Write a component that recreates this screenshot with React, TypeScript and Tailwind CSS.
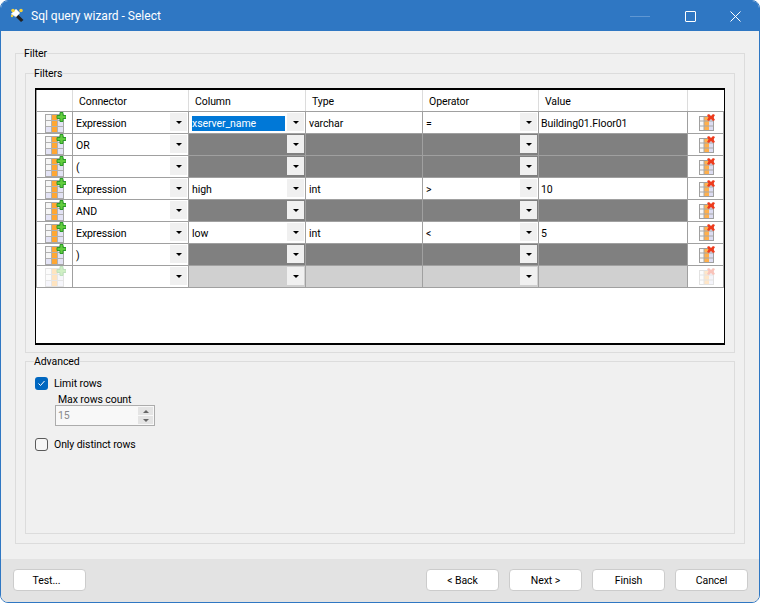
import React from "react";

function AddIcon({ faded }: { faded?: boolean }) {
  return (
    <svg width="22" height="22" viewBox="0 0 22 22" className={faded ? "opacity-30" : ""}>
      <rect x="1.500" y="2.500" width="18" height="18" fill="#f6f6f6" stroke="#a8a8a8" />
      <rect x="8" y="3" width="6" height="17" fill="#ffa733" />
      <rect x="14" y="3" width="5" height="17" fill="#e2e2f4" />
      <rect x="2" y="15" width="6" height="5" fill="#e4e4f6" />
      <path d="M2 8.500h17M2 14.500h17M7.500 3v17M13.500 3v17" stroke="#b0b0b0" strokeWidth="1" fill="none" />
      <path d="M16 0.500h3v3h3v3h-3v3h-3v-3h-3v-3h3z" fill="#62cc3e" stroke="#2a9a28" strokeWidth="1" />
    </svg>
  );
}

function DelIcon({ faded }: { faded?: boolean }) {
  return (
    <svg width="22" height="22" viewBox="0 0 22 22" className={faded ? "opacity-30" : ""}>
      <rect x="4.500" y="4.500" width="14" height="14" fill="#f8f8f8" stroke="#a0a0a0" />
      <rect x="9" y="5" width="5" height="13" fill="#ffb04c" />
      <rect x="14" y="5" width="4" height="13" fill="#dcdcf2" />
      <path d="M5 9h13M5 14h13M9 5v13" stroke="#a8a8a8" strokeWidth="1" fill="none" />
      <path d="M12 3l2-1 2 2 2-2 2 1-1.500 2.500 1.500 2.500-2 1-2-2-2 2-2-1 1.500-2.500z" fill="#ee3b1d" />
    </svg>
  );
}

function Arrow() {
  return (
    <svg width="6" height="3" viewBox="0 0 6 3">
      <path d="M0 0h6L3 3z" fill="#000" />
    </svg>
  );
}

function ComboCell({ text, state, width, selected }: { text?: string; state: "on" | "off" | "dim"; width: string; selected?: boolean }) {
  const bg = state === "off" ? "bg-[#808080]" : state === "dim" ? "bg-[#d0d0d0]" : "bg-white";
  return (
    <div className={`${width} ${bg} flex items-center border-r border-b border-[#a0a0a0] pl-[3px] pr-px`}>
      <div className="flex-1 min-w-0 pt-[2px]">
        {selected ? (
          <span className="block w-[93px] h-[15px] leading-[15px] bg-[#0078d7] text-white">{text}</span>
        ) : (
          <span>{text}</span>
        )}
      </div>
      <div className="w-[17px] h-[18px] self-start mt-px bg-[#f0f0f0] flex items-center justify-center">
        <Arrow />
      </div>
    </div>
  );
}

function TextCell({ text, state, width, pad }: { text?: string; state: "on" | "off" | "dim"; width: string; pad: string }) {
  const bg = state === "off" ? "bg-[#808080]" : state === "dim" ? "bg-[#d0d0d0]" : "bg-white";
  return <div className={`${width} ${bg} ${pad} flex items-center border-r border-b border-[#a0a0a0] pt-[2px]`}>{text}</div>;
}

type Row = { conn: string; col?: string; type?: string; op?: string; val?: string; sel?: boolean; state: "on" | "off" | "dim"; faded?: boolean };

const rows: Row[] = [
  { conn: "Expression", col: "xserver_name", type: "varchar", op: "=", val: "Building01.Floor01", sel: true, state: "on" },
  { conn: "OR", state: "off" },
  { conn: "(", state: "off" },
  { conn: "Expression", col: "high", type: "int", op: ">", val: "10", state: "on" },
  { conn: "AND", state: "off" },
  { conn: "Expression", col: "low", type: "int", op: "<", val: "5", state: "on" },
  { conn: ")", state: "off" },
  { conn: "", state: "dim", faded: true },
];

const headers: [string, string][] = [
  ["", "w-[36px]"],
  ["Connector", "w-[116px]"],
  ["Column", "w-[117px]"],
  ["Type", "w-[117px]"],
  ["Operator", "w-[116px]"],
  ["Value", "w-[149px]"],
  ["", "w-[36px]"],
];

function Btn({ children, pad }: { children: React.ReactNode; pad?: string }) {
  return (
    <button className={`w-[73px] h-[22px] pt-[3px] ${pad ?? ""} bg-white border border-[#cccccc] rounded-[4px] text-black leading-none`}>
      {children}
    </button>
  );
}

export default function App() {
  return (
    <div className="w-[760px] h-[603px] bg-white">
      <div
        className="w-full h-full flex flex-col bg-[#f0f0f0] border border-[#2f77c3] rounded-lg overflow-hidden text-[10.5px] tracking-[-0.08px] text-black"
        style={{ fontFamily: 'Roboto, "Noto Sans", sans-serif' }}
      >
        <div className="h-[30px] shrink-0 bg-[#2f77c3] flex items-center text-white text-[12px] tracking-normal">
          <svg width="16" height="16" viewBox="0 0 16 16" className="ml-[9px] mr-[5px]">
            <path d="M5 8l6 6 2.500-2-6-6z" fill="#222" />
            <path d="M1 6L6 1l4 4-4 4z" fill="#fff" stroke="#cfcfcf" strokeWidth="0.5" />
            <circle cx="3" cy="2.500" r="1.800" fill="#f2cf3c" />
            <circle cx="11" cy="2.500" r="1.800" fill="#f2cf3c" />
            <circle cx="2" cy="8" r="1.200" fill="#f2cf3c" />
          </svg>
          <span className="flex-1">Sql query wizard - Select</span>
          <div className="w-[20px] h-px bg-[#5f97d3] mr-[35px]" />
          <div className="w-[11px] h-[11px] border border-white rounded-[1px] mr-[34px]" />
          <svg width="11" height="11" viewBox="0 0 11 11" className="mr-[18px]">
            <path d="M0.500 0.500l10 10M10.500 0.500l-10 10" stroke="#fff" strokeWidth="1" />
          </svg>
        </div>

        <div className="flex-1 min-h-0 pl-[14px] pr-[14px] pt-[14px]">
          <fieldset className="h-[499px] border border-[#dcdcdc] px-[9px] pb-[9px]">
            <legend className="-ml-px h-[16px] leading-[18px]">Filter</legend>
            <fieldset className="mt-1 border border-[#dcdcdc] px-[9px] pt-[7px] pb-[7px]">
              <legend className="-ml-px h-[16px] leading-[18px]">Filters</legend>
              <div className="w-[690px] h-[257px] border border-black border-t-2 border-b-2 bg-white">
                <div className="border-l border-[#a0a0a0]">
                  <div className="flex h-[22px] border-b border-[#a0a0a0]">
                    {headers.map(([h, w], i) => (
                      <div key={i} className={`${w} flex items-center pl-[6px] pt-[2px] ${i < 6 ? "border-r border-[#dcdcdc]" : ""}`}>
                        {h}
                      </div>
                    ))}
                  </div>
                  {rows.map((r, i) => (
                    <div key={i} className="flex h-[22px]">
                      <div className="w-[36px] border-r border-b border-[#a0a0a0] flex items-center justify-center">
                        <AddIcon faded={r.faded} />
                      </div>
                      <ComboCell text={r.conn} state="on" width="w-[116px]" />
                      <ComboCell text={r.col} state={r.state} width="w-[117px]" selected={r.sel} />
                      <TextCell text={r.type} state={r.state} width="w-[117px]" pad="pl-[3px]" />
                      <ComboCell text={r.op} state={r.state} width="w-[116px]" />
                      <TextCell text={r.val} state={r.state} width="w-[149px]" pad="pl-[2px]" />
                      <div className="w-[36px] border-r border-b border-[#a0a0a0] flex items-center justify-center">
                        <DelIcon faded={r.faded} />
                      </div>
                    </div>
                  ))}
                </div>
              </div>
            </fieldset>
            <fieldset className="h-[181px] border border-[#dcdcdc] px-[9px]">
              <legend className="-ml-px h-[16px] leading-[18px]">Advanced</legend>
              <div className="flex items-center h-[14px] mt-[7px] gap-[6px]">
                <div className="w-[13px] h-[13px] rounded-[3px] bg-[#0067c0] flex items-center justify-center">
                  <svg width="9" height="9" viewBox="0 0 9 9">
                    <path d="M1.500 4.500l2 2 4-4.500" stroke="#fff" strokeWidth="1" fill="none" />
                  </svg>
                </div>
                <span className="pt-[2px]">Limit rows</span>
              </div>
              <div className="ml-[23px] mt-px h-[14px] leading-[18px]">Max rows count</div>
              <div className="ml-[20px] w-[100px] h-[21px] border border-[#acacac] bg-[#f8f8f8] flex items-center pl-[2px] pr-px text-[#8a8a8a]">
                <span className="flex-1">15</span>
                <div className="w-[15px] h-[17px] flex flex-col gap-px">
                  <div className="flex-1 bg-[#e4e4e4] flex items-center justify-center">
                    <svg width="6" height="3" viewBox="0 0 6 3"><path d="M0 3h6L3 0z" fill="#666" /></svg>
                  </div>
                  <div className="flex-1 bg-[#e4e4e4] flex items-center justify-center">
                    <svg width="6" height="3" viewBox="0 0 6 3"><path d="M0 0h6L3 3z" fill="#666" /></svg>
                  </div>
                </div>
              </div>
              <div className="flex items-center h-[14px] mt-[11px] gap-[6px]">
                <div className="w-[13px] h-[13px] rounded-[3px] border border-[#5a5a5a] bg-[#f6f6f6]" />
                <span className="pt-[2px]">Only distinct rows</span>
              </div>
            </fieldset>
          </fieldset>
        </div>

        <div className="h-[43px] shrink-0 bg-[#e3e3e3] flex items-center pl-[12px] pr-[11px] pb-[1px]">
          <Btn pad="pr-[6px]">Test...</Btn>
          <div className="flex-1" />
          <div className="flex gap-[10px]">
            <Btn>&lt; Back</Btn>
            <Btn>Next &gt;</Btn>
            <Btn>Finish</Btn>
            <Btn>Cancel</Btn>
          </div>
        </div>
      </div>
    </div>
  );
}
